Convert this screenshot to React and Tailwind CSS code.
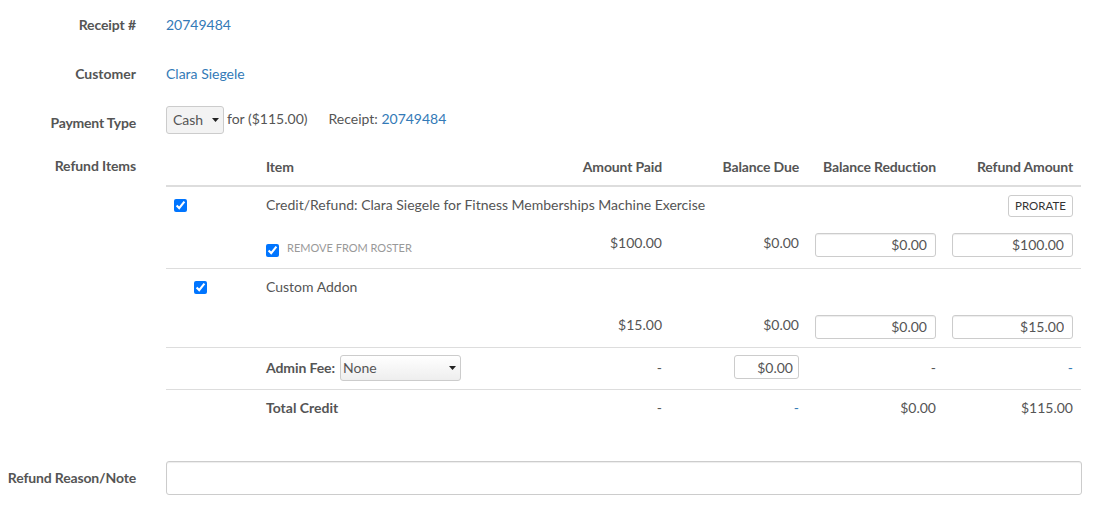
const cellText = 'px-2 text-right align-middle';
const moneyInput = 'h-[24px] w-full rounded-[3px] border border-[#cccccc] bg-white px-2 text-right text-[14px] text-[#555555] shadow-[inset_0_1px_1px_rgba(0,0,0,0.075)]';

function Caret() {
  return (
    <svg width="7" height="4" viewBox="0 0 7 4" className="pointer-events-none absolute top-1/2 right-[5px] -translate-y-1/2">
      <path d="M0 0h7L3.5 4z" fill="#222222" />
    </svg>
  );
}

function MoneyInput({ value }) {
  return <input readOnly value={value} className={moneyInput} />;
}

function FieldLabel({ children, className = '' }) {
  return (
    <div className={`w-[136px] shrink-0 text-right font-bold text-[#555555] ${className}`}>{children}</div>
  );
}

function ItemRows({ checkboxClass, title, paid, refund, roster, lastRow, textPad, inputPad, titlePad = '' }) {
  return (
    <>
      <tr className="h-[38px]">
        <td className="align-middle">
          <input type="checkbox" defaultChecked className={`block ${checkboxClass}`} />
        </td>
        <td colSpan={3} className={`px-2 align-middle ${titlePad}`}>{title}</td>
        <td colSpan={2} className="px-2 text-right align-middle">
          {roster && (
            <button className="h-[22px] w-[65px] rounded-[3px] border border-[#cccccc] bg-white text-[11.5px] text-[#333333]">
              PRORATE
            </button>
          )}
        </td>
      </tr>
      <tr className={`border-b border-[#dddddd] ${lastRow}`}>
        <td />
        <td className="px-2 align-middle">
          {roster && (
            <label className="flex items-center pt-[4px]">
              <input type="checkbox" defaultChecked className="m-0 mt-[6px] block" />
              <span className="ml-[8px] text-[11px] text-[#999999]">REMOVE FROM ROSTER</span>
            </label>
          )}
        </td>
        <td className={`${cellText} ${textPad}`}>{paid}</td>
        <td className={`${cellText} ${textPad}`}>$0.00</td>
        <td className={`px-2 align-middle ${inputPad}`}><MoneyInput value="$0.00" /></td>
        <td className={`px-2 align-middle ${inputPad}`}><MoneyInput value={refund} /></td>
      </tr>
    </>
  );
}

export default function App() {
  return (
    <div className="h-[507px] w-[1094px] overflow-hidden bg-white text-[14px] leading-[20px] text-[#555555] [font-family:Lato,'Open_Sans',sans-serif]">
      {/* Receipt + customer */}
      <div className="flex gap-[30px] pt-[15px]">
        <FieldLabel className="tracking-[-0.1px]">Receipt #</FieldLabel>
        <a className="text-[#337ab7]">20749484</a>
      </div>
      <div className="mt-[29px] flex gap-[30px]">
        <FieldLabel>Customer</FieldLabel>
        <a className="text-[#337ab7]">Clara Siegele</a>
      </div>

      {/* Payment type */}
      <div className="mt-[22px] flex gap-[30px]">
        <FieldLabel className="pt-[7px] tracking-[-0.2px]">Payment Type</FieldLabel>
        <div className="flex items-start">
          <div className="relative">
            <select className="block h-[28px] w-[58px] appearance-none rounded-[3px] border border-[#cccccc] bg-[#f3f3f3] pl-[6px] text-[#555555]">
              <option>Cash</option>
            </select>
            <Caret />
          </div>
          <span className="ml-[3px] pt-[3px]">for ($115.00)</span>
          <span className="ml-[21px] pt-[3px]">Receipt: <a className="text-[#337ab7]">20749484</a></span>
        </div>
      </div>

      {/* Refund table */}
      <div className="mt-[17px] flex gap-[30px]">
        <FieldLabel className="pt-[5px] tracking-[-0.1px]">Refund Items</FieldLabel>
        <table className="w-[915px] table-fixed border-collapse">
          <colgroup>
            <col className="w-[92px]" />
            <col className="w-[278px]" />
            <col className="w-[134px]" />
            <col className="w-[137px]" />
            <col className="w-[137px]" />
            <col className="w-[137px]" />
          </colgroup>
          <thead>
            <tr className="h-[35px] border-b-2 border-[#dddddd] font-bold tracking-[-0.15px] [&>th]:pb-[3px]">
              <th />
              <th className="px-2 text-left">Item</th>
              <th className="px-2 text-right whitespace-nowrap">Amount Paid</th>
              <th className="px-2 text-right whitespace-nowrap">Balance Due</th>
              <th className="px-2 text-right whitespace-nowrap">Balance Reduction</th>
              <th className="px-2 text-right whitespace-nowrap">Refund Amount</th>
            </tr>
          </thead>
          <tbody>
            <ItemRows
              roster
              checkboxClass="m-0 ml-[8px]"
              title="Credit/Refund: Clara Siegele for Fitness Memberships Machine Exercise"
              paid="$100.00"
              refund="$100.00"
              lastRow="h-[44px]"
              textPad="pb-[6px]"
              inputPad="pb-[2px]"
              titlePad="pb-[2px]"
            />
            <ItemRows
              checkboxClass="m-0 ml-[28px]"
              title="Custom Addon"
              paid="$15.00"
              refund="$15.00"
              lastRow="h-[41px] [&>td]:pt-[1px]"
              textPad="pb-[3px]"
              inputPad=""
            />
            <tr className="h-[42px] border-b border-[#dddddd]">
              <td />
              <td className="px-2 align-middle">
                <div className="flex items-center">
                  <span className="w-[74px] font-bold tracking-[-0.1px]">Admin Fee:</span>
                  <div className="relative">
                    <select className="block h-[26px] w-[121px] appearance-none rounded-[3px] border border-[#cccccc] bg-linear-to-b from-white to-[#eeeeee] pl-[2px] text-[#555555]">
                      <option>None</option>
                    </select>
                    <Caret />
                  </div>
                </div>
              </td>
              <td className={cellText}>-</td>
              <td className="px-2 pb-[2px] text-right align-middle">
                <input readOnly value="$0.00" className="ml-auto block h-[24px] w-[65px] rounded-[3px] border border-[#cccccc] bg-white px-[5px] text-right text-[#555555]" />
              </td>
              <td className={cellText}>-</td>
              <td className={`${cellText} text-[#337ab7]`}>-</td>
            </tr>
            <tr className="h-[37px]">
              <td />
              <td className="px-2 font-bold">Total Credit</td>
              <td className={cellText}>-</td>
              <td className={`${cellText} text-[#337ab7]`}>-</td>
              <td className={cellText}>$0.00</td>
              <td className={cellText}>$115.00</td>
            </tr>
          </tbody>
        </table>
      </div>

      {/* Note */}
      <div className="mt-[35px] flex items-center gap-[30px]">
        <FieldLabel className="pt-[0px] whitespace-nowrap tracking-[-0.15px]">Refund Reason/Note</FieldLabel>
        <input className="h-[34px] w-[916px] rounded-[3px] border border-[#cccccc] bg-white px-3 shadow-[inset_0_1px_1px_rgba(0,0,0,0.075)]" />
      </div>
    </div>
  );
}
